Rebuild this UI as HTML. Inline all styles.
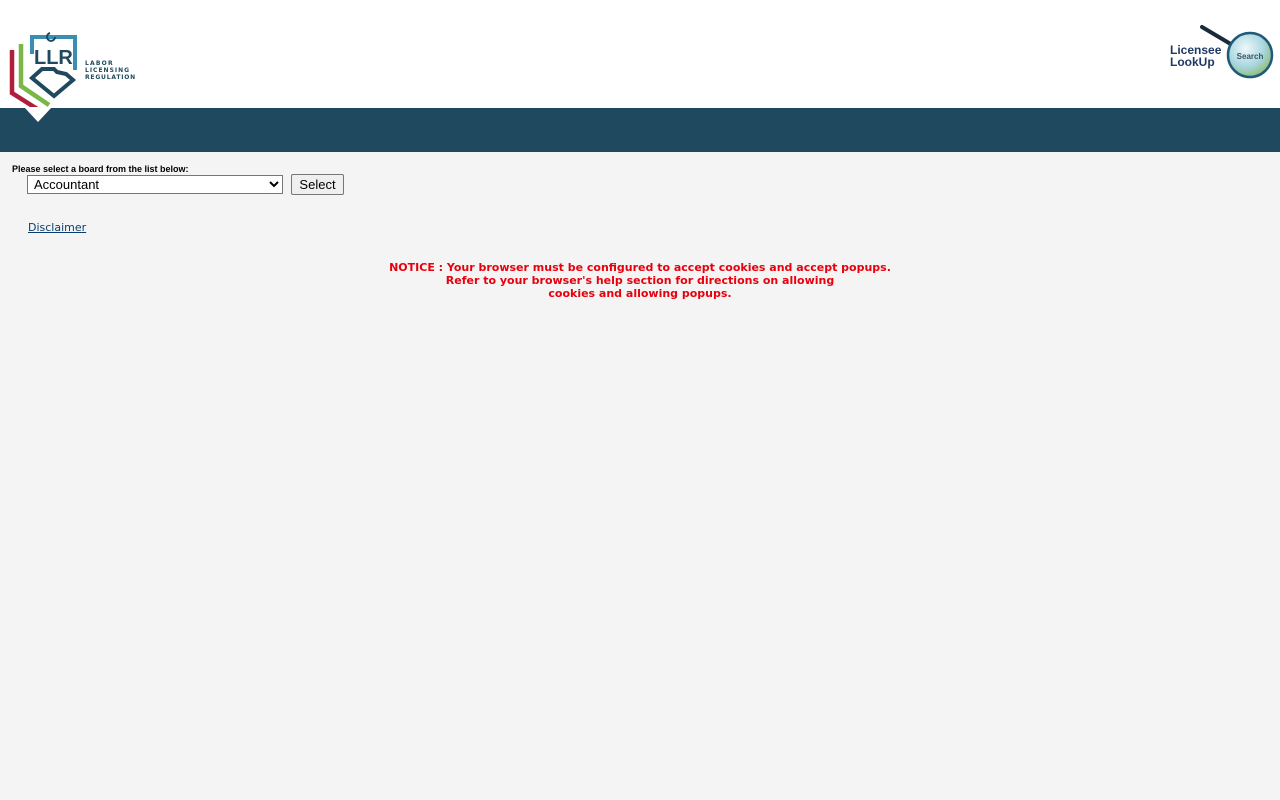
<!DOCTYPE html>
<html><head><style>
body{margin:0;background:#f4f4f4;font-family:"Liberation Sans",Arial,sans-serif;}
.hdr{height:108px;background:#fff;position:relative;}
.band{height:44px;background:#1f495e;position:relative;}
.lbl{position:absolute;left:12px;top:164px;font-size:9px;font-weight:bold;color:#000;}
select{position:absolute;left:27px;top:175px;width:256px;height:19px;font-family:"Liberation Sans",Arial,sans-serif;font-size:13px;border:1px solid #767676;background:#fff;padding:0 2px;}
button{position:absolute;left:291px;top:174px;width:53px;height:21px;font-family:"Liberation Sans",Arial,sans-serif;font-size:13px;border:1px solid #767676;background:#efefef;border-radius:2px;padding:0;}
a{position:absolute;left:28px;top:221px;font-size:11px;color:#0b3d6e;font-family:"DejaVu Sans",Verdana,sans-serif;}
.notice{position:absolute;left:0;width:1280px;top:261px;text-align:center;color:#e8000d;font-family:"DejaVu Sans",Verdana,sans-serif;font-weight:bold;font-size:11px;line-height:13px;}
</style></head><body>
<div class="hdr">
<svg width="150" height="130" style="position:absolute;left:0;top:0;overflow:visible">
<polyline points="12,50 12,93 42,112" fill="none" stroke="#b01e3a" stroke-width="4.5"/>
<polyline points="21,44 21,86 49,105" fill="none" stroke="#7ab648" stroke-width="4.5"/>
<polyline points="32,54 32,37 75,37 75,70" fill="none" stroke="#3a8fb0" stroke-width="4"/>
<path d="M50 33a4 4 0 1 0 5 4" fill="none" stroke="#1f495e" stroke-width="2"/>
<text x="34" y="64" font-family="Liberation Sans,Arial" font-weight="bold" font-size="20" fill="#1f495e">LLR</text>
<path d="M32 78 L42 69 L54 69 L57 72 L66 74 L73 80 L54 96 Z" fill="none" stroke="#1f495e" stroke-width="4" stroke-linejoin="miter"/>
<text x="85" y="65" font-family="DejaVu Sans,Verdana" font-weight="bold" font-size="6" letter-spacing="1.2" fill="#1f495e">LABOR</text>
<text x="85" y="72" font-family="DejaVu Sans,Verdana" font-weight="bold" font-size="6" letter-spacing="1" fill="#1f495e">LICENSING</text>
<text x="85" y="79" font-family="DejaVu Sans,Verdana" font-weight="bold" font-size="6" letter-spacing="0.8" fill="#1f495e">REGULATION</text>
</svg>
<svg width="110" height="60" style="position:absolute;left:1168px;top:24px">
<defs><radialGradient id="g" cx="40%" cy="35%" r="70%"><stop offset="0" stop-color="#eef8fa"/><stop offset=".6" stop-color="#a8d6e0"/><stop offset="1" stop-color="#8fb86a"/></radialGradient></defs>
<line x1="34" y1="3" x2="66" y2="22" stroke="#1a2a3a" stroke-width="4" stroke-linecap="round"/>
<circle cx="82" cy="31" r="22" fill="url(#g)" stroke="#1f5a78" stroke-width="2.5"/>
<text x="82" y="35" text-anchor="middle" font-family="Liberation Sans,Arial" font-weight="bold" font-size="8" fill="#3a5560">Search</text>
<text x="2" y="30" font-family="Liberation Sans,Arial" font-weight="bold" font-size="12" fill="#1f3a60">Licensee</text>
<text x="2" y="42" font-family="Liberation Sans,Arial" font-weight="bold" font-size="12" fill="#1f3a60">LookUp</text>
</svg>
</div>
<div class="band"><div style="position:absolute;left:24px;top:-1px;width:0;height:0;border-left:14px solid transparent;border-right:14px solid transparent;border-top:15px solid #fff"></div></div>
<div class="lbl">Please select a board from the list below:</div>
<select><option>Accountant</option></select>
<button>Select</button>
<a href="#">Disclaimer</a>
<div class="notice">NOTICE : Your browser must be configured to accept cookies and accept popups.<br>Refer to your browser's help section for directions on allowing<br>cookies and allowing popups.</div>
</body></html>
